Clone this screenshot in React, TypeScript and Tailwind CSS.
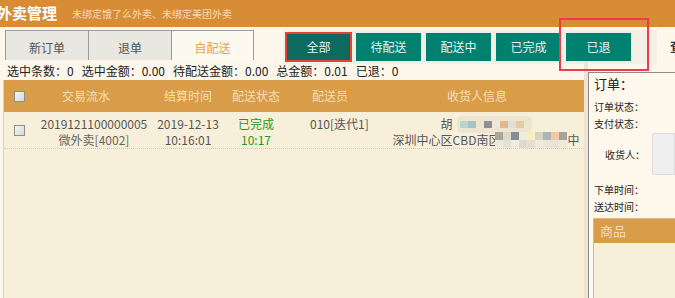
import React from "react";

const tabs = [
  { label: "新订单", active: false },
  { label: "退单", active: false },
  { label: "自配送", active: true },
];

const filters = ["全部", "待配送", "配送中", "已完成", "已退"];

const stats = [
  "选中条数：0",
  "选中金额：0.00",
  "待配送金额：0.00",
  "总金额：0.01",
  "已退：0",
];

// blurred phone / address mosaic
const phoneBlocks = ["#b6d8cc", "#a8c3c8", "#efe5cc", "#8e9094", "#efe9da", "#e2b88f", "#e0dfd3", "#e6cba9"];
const addrTop = ["#aba59c", "#dcdacd", "#838d92", "#eeeddc", "#f4eec0", "#d7d3bf", "#a7b8bb", "#f4c8a4", "#a9a39a"];
const addrBottom = ["#ebe8dc", "#e6e2d3", "#efede1", "#e3d9c9", "#e9dfcc", "#efebdc", "#ece6d6", "#e9e4d6", "#efe9dc"];

function Checkbox() {
  return (
    <span className="block w-[11px] h-[11px] border border-[#8f8f8f] bg-gradient-to-br from-[#f4f4f4] to-[#d8d8d8]" />
  );
}

function OrderTable() {
  return (
    <div className="flex-1 min-h-0 ml-[3px] border-l border-[#e2d1b0] bg-[#f7efd9] flex flex-col">
      {/* header */}
      <div className="h-[32px] bg-[#d99c48] grid grid-cols-[30px_120px_68px_68px_80px_1fr] items-center text-[12px] text-[#f6dfb8]">
        <div className="flex justify-center">
          <Checkbox />
        </div>
        <div className="text-center pr-[16px]">交易流水</div>
        <div className="text-center">结算时间</div>
        <div className="text-center">配送状态</div>
        <div className="text-center">配送员</div>
        <div className="text-center">收货人信息</div>
      </div>

      {/* row */}
      <div className="h-[37px] grid grid-cols-[30px_120px_68px_68px_80px_1fr] border-b border-dotted border-[#d6c9b0] text-[12px] leading-[16px] text-[#555]">
        <div className="flex justify-center items-center">
          <Checkbox />
        </div>
        <div className="pt-[4px] text-center">
          <div>2019121100000005</div>
          <div className="text-[#666]">微外卖[4002]</div>
        </div>
        <div className="pt-[4px] text-center">
          <div>2019-12-13</div>
          <div>10:16:01</div>
        </div>
        <div className="pt-[4px] text-center text-[#1f9a1f]">
          <div>已完成</div>
          <div>10:17</div>
        </div>
        <div className="pt-[4px] pl-[20px] whitespace-nowrap">010[迭代1]</div>
        <div className="pt-[4px] pl-[18px] text-center whitespace-nowrap">
          <div className="flex justify-center items-center h-[16px]">
            <span>胡</span>
            <span className="w-[4px]" />
            <span className="inline-flex items-center w-[75px] h-[17px] rounded-[5px] bg-[#eee5d0] pl-[3px]">
              {phoneBlocks.map((c, i) => (
                <span key={i} className="w-[8px] h-[7px] blur-[0.4px]" style={{ backgroundColor: c }} />
              ))}
            </span>
          </div>
          <div className="flex justify-center items-center h-[16px]">
            <span>深圳中心区CBD南区</span>
            <span className="inline-flex flex-col -ml-[5px] relative">
              <span className="flex">
                {addrTop.map((c, i) => (
                  <span key={i} className="w-[8px] h-[8px] blur-[0.4px]" style={{ backgroundColor: c }} />
                ))}
              </span>
              <span className="flex">
                {addrBottom.map((c, i) => (
                  <span key={i} className="w-[8px] h-[8px] blur-[0.4px]" style={{ backgroundColor: c }} />
                ))}
              </span>
            </span>
            <span>中</span>
          </div>
        </div>
      </div>
      <div className="flex-1" />
    </div>
  );
}

function DetailPanel() {
  return (
    <div className="w-[87px] mt-[10px] border-l border-t border-[#8c8c8c] bg-[#fdf7ec] flex flex-col overflow-hidden text-[10px] text-[#222] whitespace-nowrap">
      <div className="pl-[5px] pt-[1px]">
        <div className="h-[20px] flex items-center text-[13px]">订单：</div>
        <div className="mt-[4px] h-[17px] flex items-center">订单状态：</div>
        <div className="h-[17px] flex items-center">支付状态：</div>
        <div className="mt-[1px] h-[42px] flex items-center">
          <span className="ml-[11px]">收货人：</span>
          <span className="ml-[7px] flex-1 h-full bg-[#efefef] border border-[#dcdcdc] rounded-l-[2px]" />
        </div>
        <div className="mt-[6px] h-[17px] flex items-center">下单时间：</div>
        <div className="h-[17px] flex items-center">送达时间：</div>
      </div>
      <div className="mt-[3px] ml-[4px] flex-1 flex flex-col border-l border-t border-[#d6b88a]">
        <div className="h-[24px] bg-[#d99c48] flex items-center pl-[6px] text-[13px] text-[#f3dcb5]">商品</div>
        <div className="flex-1 bg-[#f7efd9]" />
      </div>
    </div>
  );
}

export default function App() {
  return (
    <div className="relative h-screen w-full overflow-hidden bg-[#fdf6ea] flex flex-col font-['Noto_Sans_CJK_SC','Liberation_Sans',sans-serif]">
      {/* Title bar */}
      <div className="h-[27px] shrink-0 bg-[#d98c36] flex items-center whitespace-nowrap">
        <span className="-ml-[3px] text-[15px] font-bold text-white">外卖管理</span>
        <span className="ml-[15px] text-[10px] text-[#f7d8ad]">未绑定饿了么外卖、未绑定美团外卖</span>
      </div>

      {/* Tabs + filters */}
      <div className="h-[35px] shrink-0 flex items-start pt-[3px] whitespace-nowrap">
        <div className="ml-[5px] flex h-[30px]">
          {tabs.map((t, i) => (
            <div
              key={t.label}
              className={`w-[83px] h-full flex items-center justify-center pt-[4px] text-[12px] border-t border-l border-[#9c9c9c] ${
                i === tabs.length - 1 ? "border-r" : ""
              } ${t.active ? "bg-[#fcf9f1] text-[#e9a23b]" : "bg-[#e8e7e0] text-[#555]"}`}
            >
              {t.label}
            </div>
          ))}
        </div>

        <div className="ml-[29px] flex gap-[3px] px-[2px] py-[2px] pr-[25px] bg-[#f4f0e6]">
          {filters.map((f, i) => (
            <div
              key={f}
              className={`w-[67px] h-[30px] flex items-center justify-center text-[12px] text-[#e8f4f0] ${
                i === 0 ? "bg-[#0e6a5e] border-2 border-[#e8412c]" : "bg-[#00806f] border border-[#e9efe9]"
              }`}
            >
              {f}
            </div>
          ))}
        </div>

        <span className="ml-[13px] mt-[6px] text-[13px] font-bold text-[#333]">查询</span>
      </div>

      {/* Main area */}
      <div className="flex-1 min-h-0 flex">
        <div className="w-[584px] flex flex-col">
          <div className="h-[18px] shrink-0 pl-[7px] flex items-center gap-[8px] text-[12px] text-[#222] whitespace-nowrap">
            {stats.map((s) => (
              <span key={s}>{s}</span>
            ))}
          </div>
          <OrderTable />
        </div>
        <div className="w-[4px] bg-[#efe4cf]" />
        <DetailPanel />
      </div>

      {/* annotation box */}
      <div className="absolute left-[559px] top-[18px] w-[90px] h-[53px] border-2 border-[#ee3b4a]" />
    </div>
  );
}
